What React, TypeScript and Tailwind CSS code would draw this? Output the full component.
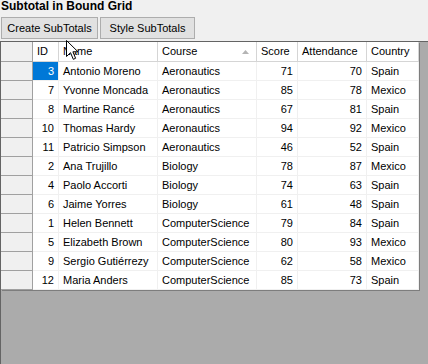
import React from "react";

type Row = {
	id: number;
	name: string;
	course: string;
	score: number;
	attendance: number;
	country: string;
};

const rows: Row[] = [
	{ id: 3, name: "Antonio Moreno", course: "Aeronautics", score: 71, attendance: 70, country: "Spain" },
	{ id: 7, name: "Yvonne Moncada", course: "Aeronautics", score: 85, attendance: 78, country: "Mexico" },
	{ id: 8, name: "Martine Rancé", course: "Aeronautics", score: 67, attendance: 81, country: "Spain" },
	{ id: 10, name: "Thomas Hardy", course: "Aeronautics", score: 94, attendance: 92, country: "Mexico" },
	{ id: 11, name: "Patricio Simpson", course: "Aeronautics", score: 46, attendance: 52, country: "Spain" },
	{ id: 2, name: "Ana Trujillo", course: "Biology", score: 78, attendance: 87, country: "Mexico" },
	{ id: 4, name: "Paolo Accorti", course: "Biology", score: 74, attendance: 63, country: "Spain" },
	{ id: 6, name: "Jaime Yorres", course: "Biology", score: 61, attendance: 48, country: "Spain" },
	{ id: 1, name: "Helen Bennett", course: "ComputerScience", score: 79, attendance: 84, country: "Spain" },
	{ id: 5, name: "Elizabeth Brown", course: "ComputerScience", score: 80, attendance: 93, country: "Mexico" },
	{ id: 9, name: "Sergio Gutiérrezy", course: "ComputerScience", score: 62, attendance: 58, country: "Mexico" },
	{ id: 12, name: "Maria Anders", course: "ComputerScience", score: 85, attendance: 73, country: "Spain" },
];

const cols = "grid grid-cols-[32px_26px_99px_99px_41px_69px_52px]";

function HeaderCell({ children, sort }: { children?: React.ReactNode; sort?: boolean }) {
	return (
		<div className="relative flex h-[20px] items-center border-r border-b border-[#d5d5d5] bg-white pl-[4px]">
			{children}
			{sort && (
				<svg className="absolute right-[7px] top-[8px]" width="7" height="4" viewBox="0 0 7 4">
					<path d="M0 4 L3.5 0 L7 4 Z" fill="#b4b4b4" />
				</svg>
			)}
		</div>
	);
}

export default function App() {
	return (
		<div
			className="relative h-[364px] w-[428px] overflow-hidden bg-[#f0f0f0] text-[11px] text-black"
			style={{ fontFamily: '"Liberation Sans", Arial, sans-serif' }}
		>
			<div className="h-[41px]">
				<div className="h-[17px] pl-[1px] text-[12px] font-bold leading-[13px]">Subtotal in Bound Grid</div>
				<div className="flex gap-[2px] pl-[1px]">
					<button className="h-[22px] w-[97px] border border-[#adadad] bg-[#e1e1e1] text-[11px]">
						Create SubTotals
					</button>
					<button className="h-[22px] w-[95px] border border-[#adadad] bg-[#e1e1e1] text-[11px]">
						Style SubTotals
					</button>
				</div>
			</div>

			<div className="h-[323px] border-t border-l border-[#646464] bg-[#ababab]">
				<div className="w-[418px] shadow-[1px_1px_0_#7d7d7d]">
					<div className={cols}>
						<div className="h-[20px] border-r border-b border-[#a0a0a0] bg-[#f0f0f0]" />
						<HeaderCell>ID</HeaderCell>
						<HeaderCell>Name</HeaderCell>
						<HeaderCell sort>Course</HeaderCell>
						<HeaderCell>Score</HeaderCell>
						<HeaderCell>Attendance</HeaderCell>
						<HeaderCell>Country</HeaderCell>
					</div>
					{rows.map((r, i) => (
						<div key={r.id} className={`${cols} h-[19px]`}>
							<div className="border-r border-b border-[#a0a0a0] bg-[#f0f0f0]" />
							<div
								className={`flex items-center justify-end border-r border-b pr-[4px] ${
									i === 0
										? "border-[#f0f0f0] bg-[#0078d7] text-white"
										: "border-[#f0f0f0] bg-white"
								}`}
							>
								{r.id}
							</div>
							<div className="flex items-center border-r border-b border-[#f0f0f0] bg-white pl-[4px]">
								{r.name}
							</div>
							<div className="flex items-center border-r border-b border-[#f0f0f0] bg-white pl-[4px]">
								{r.course}
							</div>
							<div className="flex items-center justify-end border-r border-b border-[#f0f0f0] bg-white pr-[4px]">
								{r.score}
							</div>
							<div className="flex items-center justify-end border-r border-b border-[#f0f0f0] bg-white pr-[4px]">
								{r.attendance}
							</div>
							<div className="flex items-center border-r border-b border-[#f0f0f0] bg-white pl-[4px]">
								{r.country}
							</div>
						</div>
					))}
				</div>
			</div>

			<svg
				className="absolute left-[66px] top-[40px]"
				width="13"
				height="21"
				viewBox="0 0 13 21"
			>
				<path
					d="M0.5 0.5 L0.5 16.5 L4.5 12.7 L7.3 19.3 L9.6 18.3 L6.9 11.8 L12 11.8 Z"
					fill="white"
					stroke="black"
					strokeWidth="1"
				/>
			</svg>
		</div>
	);
}
